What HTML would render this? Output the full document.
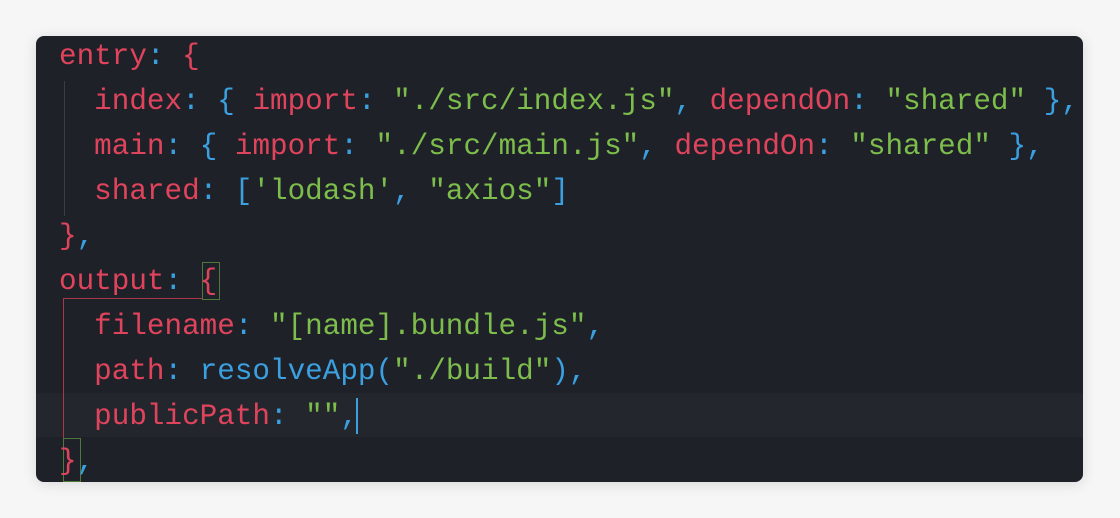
<!DOCTYPE html>
<html><head><style>
body{margin:0;width:1120px;height:518px;background:#f6f6f6;overflow:hidden;position:relative}
.p{position:absolute;left:36px;top:36px;width:1047px;height:446px;background:#1f2129;border-radius:8px;box-shadow:0 2px 14px rgba(0,0,0,.12);overflow:hidden}
.l{position:absolute;left:23px;height:45px;line-height:45px;font-family:"Liberation Mono",monospace;font-size:29.3px;white-space:pre;color:#e0445c}
.b{color:#3aa0e0}.g{color:#7cbd4b}.w{color:#c8c8c8}
.hl{position:absolute;left:0;right:0;top:357px;height:44px;background:#24262d}
.guide{position:absolute;left:28px;width:1px;background:#3a3d45}
</style></head><body>
<div class="p">
<div class="hl"></div>
<div class="guide" style="top:45px;height:135px"></div>
<div style="position:absolute;left:27px;top:262px;width:1px;height:140px;background:#a8384a"></div>
<div style="position:absolute;left:27px;top:262px;width:140px;height:1px;background:#a8384a"></div>
<div style="position:absolute;left:166px;top:226px;width:16px;height:36px;border:1px solid #4d7a3a"></div>
<div style="position:absolute;left:27px;top:402px;width:16px;height:42px;border:1px solid #4d7a3a"></div>
<div class="l" style="top:-2px">entry<span class="b">:</span> {</div>
<div class="l" style="top:43px">  index<span class="b">:</span> <span class="b">{</span> import<span class="b">:</span> <span class="g">"./src/index.js"</span><span class="b">,</span> dependOn<span class="b">:</span> <span class="g">"shared"</span> <span class="b">}</span><span class="b">,</span></div>
<div class="l" style="top:88px">  main<span class="b">:</span> <span class="b">{</span> import<span class="b">:</span> <span class="g">"./src/main.js"</span><span class="b">,</span> dependOn<span class="b">:</span> <span class="g">"shared"</span> <span class="b">}</span><span class="b">,</span></div>
<div class="l" style="top:133px">  shared<span class="b">:</span> <span class="b">[</span><span class="g">'lodash'</span><span class="b">,</span> <span class="g">"axios"</span><span class="b">]</span></div>
<div class="l" style="top:178px">}<span class="b">,</span></div>
<div class="l" style="top:223px">output<span class="b">:</span> {</div>
<div class="l" style="top:268px">  filename<span class="b">:</span> <span class="g">"[name].bundle.js"</span><span class="b">,</span></div>
<div class="l" style="top:313px">  path<span class="b">:</span> <span class="b">resolveApp(</span><span class="g">"./build"</span><span class="b">),</span></div>
<div class="l" style="top:358px">  publicPath<span class="b">:</span> <span class="g">""</span><span class="b">,</span></div>
<div style="position:absolute;left:320px;top:362px;width:2px;height:36px;background:#3aa0e0"></div>
<div class="l" style="top:403px">}<span class="b">,</span></div>
</div>
</body></html>
